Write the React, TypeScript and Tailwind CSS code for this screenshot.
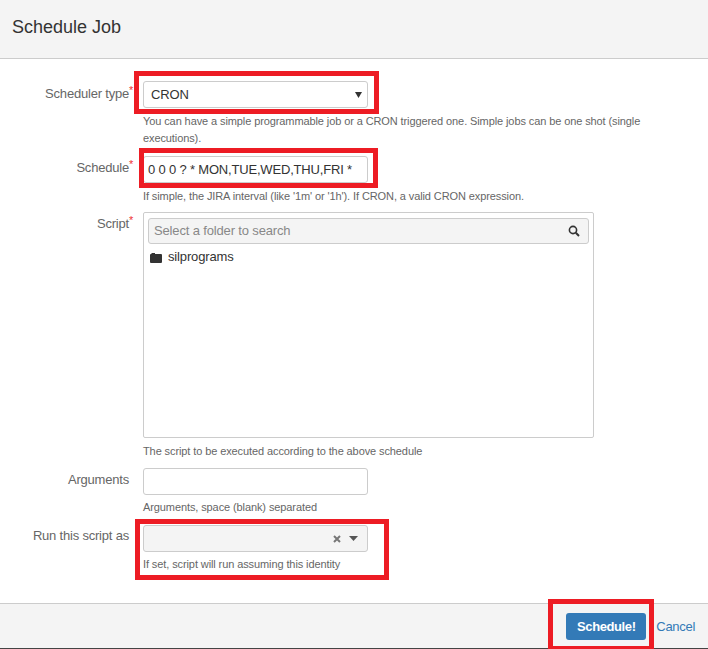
import React from 'react';

const font = {fontFamily: '"Liberation Sans", Arial, sans-serif'};

const Mark = ({className}: {className: string}) => (
  <div className={"absolute border-[5px] border-[#ed1c24] pointer-events-none " + className}></div>
);

const Row = ({label, required, children, className, labelClass}: {label: string; required?: boolean; children: React.ReactNode; className?: string; labelClass?: string}) => (
  <div className={"flex flex-row " + (className || "")}>
    <div className={"w-[129px] shrink-0 text-right text-[13px] tracking-[-0.2px] leading-[20px] text-[#666] " + (labelClass || "")}>
      <span className="relative">
        {label}
        {required && <span className="absolute left-full -top-[3px] text-[#e33] text-[11px] leading-[14px]">*</span>}
      </span>
    </div>
    <div className="ml-[14px] flex-1 relative">{children}</div>
  </div>
);

const Help = ({children, className}: {children: React.ReactNode; className?: string}) => (
  <p className={"text-[11px] leading-[17px] text-[#666] tracking-[-0.1px] " + (className || "")}>{children}</p>
);

export default function App() {
  return (
    <div className="w-[708px] h-[649px] flex flex-col bg-white overflow-hidden" style={font}>
      <div className="h-[59px] shrink-0 bg-[#f4f4f4] border-b border-[#ccc] pl-[12px] pt-[16px]">
        <h4 className="text-[18px] leading-[22px] text-[#333]">Schedule Job</h4>
      </div>

      <div className="flex-1 pt-[22px] pr-[60px]">
        <Row label="Scheduler type" required labelClass="pt-[3px]">
          <Mark className="-left-[9px] -top-[10px] w-[245px] h-[43px]" />
          <div className="w-[225px] h-[27px] bg-white border border-[#ccc] rounded-[3px] flex items-center justify-between pl-[7px] pr-[5px] text-[13px] tracking-[-0.15px] text-[#333]">
            <span>CRON</span>
            <svg width="7" height="6" viewBox="0 0 7 6"><path d="M0 0h7L3.5 6z" fill="#333" /></svg>
          </div>
          <Help className="mt-[5px]">You can have a simple programmable job or a CRON triggered one. Simple jobs can be one shot (single executions).</Help>
        </Row>

        <Row label="Schedule" required className="mt-[9px]" labelClass="pt-[2px]">
          <Mark className="-left-[4px] -top-[8px] w-[239px] h-[40px]" />
          <div className="w-[225px] h-[27px] bg-white border border-[#ccc] rounded-[3px] flex items-center pl-[4px] text-[13px] tracking-[-0.18px] text-[#333] whitespace-nowrap">
            0 0 0 ? * MON,TUE,WED,THU,FRI *
          </div>
          <Help className="mt-[5px]">If simple, the JIRA interval (like '1m' or '1h'). If CRON, a valid CRON expression.</Help>
        </Row>

        <Row label="Script" required className="mt-[7px]" labelClass="pt-[2px]">
          <div className="w-[451px] h-[226px] border border-[#ccc] rounded-[2px] px-[4px] pt-[5px]">
            <div className="h-[26px] bg-[#f4f4f4] border border-[#ccc] rounded-[3px] flex items-center justify-between pl-[5px] pr-[8px] text-[13px] tracking-[-0.15px] text-[#888]">
              <span>Select a folder to search</span>
              <svg width="12" height="12" viewBox="0 0 12 12" fill="none" stroke="#333" strokeWidth="1.6">
                <circle cx="5" cy="5" r="3.6" />
                <path d="M7.8 7.8L11 11" strokeWidth="2" />
              </svg>
            </div>
            <div className="mt-[3px] flex items-center h-[20px] pl-[2px] text-[13px] tracking-[-0.15px] text-[#333]">
              <svg width="12" height="10" viewBox="0 0 12 10" className="mt-[1px]">
                <path d="M0 2Q0 1 1 1H1.5V0H5V1H11Q12 1 12 2V9Q12 10 11 10H1Q0 10 0 9Z" fill="#333" />
              </svg>
              <span className="ml-[6px]">silprograms</span>
            </div>
          </div>
          <Help className="mt-[5px]">The script to be executed according to the above schedule</Help>
        </Row>

        <Row label="Arguments" className="mt-[8px]" labelClass="pt-[2px]">
          <div className="w-[225px] h-[27px] bg-white border border-[#ccc] rounded-[3px]"></div>
          <Help className="mt-[4px]">Arguments, space (blank) separated</Help>
        </Row>

        <Row label="Run this script as" className="mt-[9px]" labelClass="pt-[1px]">
          <Mark className="-left-[8px] -top-[6px] w-[254px] h-[61px]" />
          <div className="w-[225px] h-[27px] bg-[#f4f4f4] border border-[#ccc] rounded-[3px] flex items-center justify-end pr-[9px]">
            <svg width="8" height="8" viewBox="0 0 8 8" stroke="#777" strokeWidth="2"><path d="M1 1l6 6M7 1L1 7" /></svg>
            <svg width="9" height="5" viewBox="0 0 9 5" className="ml-[8px]"><path d="M0 0h9L4.5 5z" fill="#555" /></svg>
          </div>
          <Help className="mt-[4px]">If set, script will run assuming this identity</Help>
        </Row>
      </div>

      <div className="h-[46px] shrink-0 bg-[#f4f4f4] border-t border-[#ccc] border-b border-b-[#444] flex items-center justify-end pr-[13px] pt-[1px]">
        <div className="relative">
          <Mark className="-left-[18px] -top-[14px] w-[106px] h-[52px]" />
          <button className="block w-[80px] h-[27px] bg-[#337ab7] rounded-[3px] text-white font-bold text-[13px] tracking-[-0.4px]">Schedule!</button>
        </div>
        <a className="ml-[10px] text-[13px] tracking-[-0.3px] text-[#337ab7]">Cancel</a>
      </div>
    </div>
  );
}
